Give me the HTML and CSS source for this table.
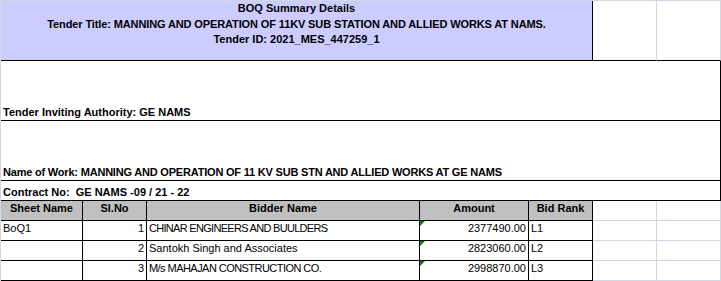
FILE: index.html
```html
<!DOCTYPE html>
<html>
<head>
<meta charset="utf-8">
<title>BOQ Summary Details</title>
<link rel="stylesheet" href="styles.css">
</head>
<body>
<div class="sheet">
  <div class="c title span5 bk">
    <div>BOQ Summary Details</div>
    <div class="tight-t">Tender Title: MANNING AND OPERATION OF 11KV SUB STATION AND ALLIED WORKS AT NAMS.</div>
    <div>Tender ID: 2021_MES_447259_1</div>
  </div>
  <div class="c bb"></div>
  <div class="c bb"></div>

  <div class="c info span7 bk">Tender Inviting Authority: GE NAMS</div>
  <div class="c info span7 bk"><span class="tight">Name of Work: MANNING AND OPERATION OF 11 KV SUB STN AND ALLIED WORKS AT GE NAMS</span></div>
  <div class="c info span7 bk">Contract No:  GE NAMS -09 / 21 - 22</div>

  <div class="c th bk">Sheet Name</div>
  <div class="c th bk">Sl.No</div>
  <div class="c th bk">Bidder Name</div>
  <div class="c th bk">Amount</div>
  <div class="c th bk">Bid Rank</div>
  <div class="c"></div>
  <div class="c"></div>

  <div class="c td bk">BoQ1</div>
  <div class="c td num bk">1</div>
  <div class="c td bk caps">CHINAR ENGINEERS AND BUULDERS</div>
  <div class="c td num amt bk">2377490.00</div>
  <div class="c td bk">L1</div>
  <div class="c"></div>
  <div class="c"></div>

  <div class="c td bk"></div>
  <div class="c td num bk">2</div>
  <div class="c td bk">Santokh Singh and Associates</div>
  <div class="c td num amt bk">2823060.00</div>
  <div class="c td bk">L2</div>
  <div class="c"></div>
  <div class="c"></div>

  <div class="c td bk"></div>
  <div class="c td num bk">3</div>
  <div class="c td bk caps2">M/s MAHAJAN CONSTRUCTION CO.</div>
  <div class="c td num amt bk">2998870.00</div>
  <div class="c td bk">L3</div>
  <div class="c"></div>
  <div class="c"></div>
</div>
</body>
</html>
```

FILE: styles.css
```css
html, body {
  margin: 0;
  padding: 0;
  background: #ffffff;
}

.sheet {
  display: grid;
  grid-template-columns: 82px 64px 273px 109px 64px 64px 64px;
  grid-template-rows: 60px 60px 60px 20px 20px 20px 20px 20px;
  width: 721px;
  border-left: 1px solid #d0d7e5;
  border-top: 1px solid #d0d7e5;
  box-sizing: border-box;
  font-family: "Liberation Sans", Arial, sans-serif;
  font-size: 11px;
  color: #000000;
}

.c {
  box-sizing: border-box;
  border-right: 1px solid #d0d7e5;
  border-bottom: 1px solid #d0d7e5;
  min-width: 0;
  overflow: hidden;
  white-space: pre;
  line-height: 13px;
}

.bk {
  border-right-color: #000000;
  border-bottom-color: #000000;
}

.bb {
  border-bottom-color: #000000;
}

.span5 { grid-column: span 5; }
.span7 { grid-column: span 7; }

.title {
  background: #ccccff;
  font-weight: bold;
  text-align: center;
  line-height: 15.5px;
  white-space: nowrap;
  padding-top: 0;
}

.tight-t {
  letter-spacing: -0.12px;
}

.info {
  font-weight: bold;
  display: flex;
  align-items: flex-end;
  padding: 0 2px 1px 2px;
}

.tight {
  letter-spacing: -0.2px;
}

.th {
  background: #c0c0c0;
  font-weight: bold;
  text-align: center;
  padding-top: 1px;
}

.td {
  padding: 1px 2px 0 2px;
}

.caps {
  letter-spacing: -0.7px;
}

.caps2 {
  letter-spacing: -0.55px;
}

.num {
  text-align: right;
}

.amt {
  position: relative;
}

.amt::before {
  content: "";
  position: absolute;
  left: 0;
  top: 0;
  width: 0;
  height: 0;
  border-top: 5px solid #008000;
  border-right: 5px solid transparent;
}
```
